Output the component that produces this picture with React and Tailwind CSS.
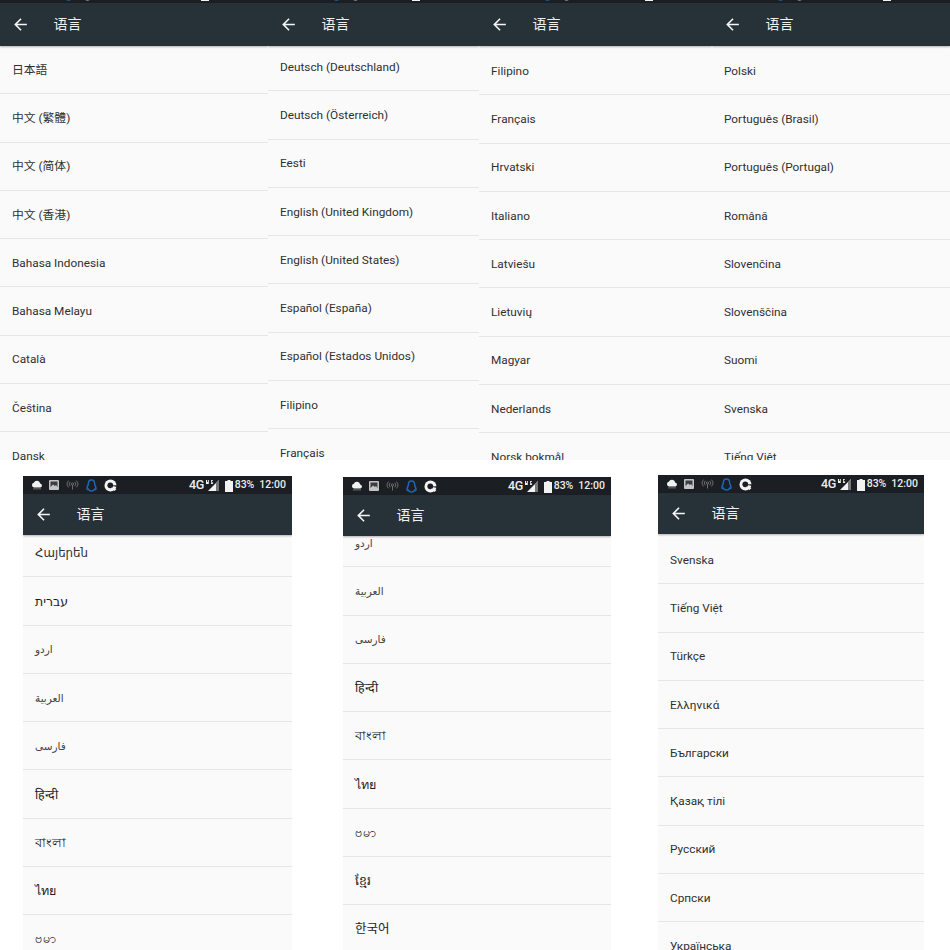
import React from 'react';

const page1 = ['日本語', '中文 (繁體)', '中文 (简体)', '中文 (香港)', 'Bahasa Indonesia', 'Bahasa Melayu', 'Català', 'Čeština', 'Dansk'];
const page2 = ['Deutsch (Deutschland)', 'Deutsch (Österreich)', 'Eesti', 'English (United Kingdom)', 'English (United States)', 'Español (España)', 'Español (Estados Unidos)', 'Filipino', 'Français'];
const page3 = ['Filipino', 'Français', 'Hrvatski', 'Italiano', 'Latviešu', 'Lietuvių', 'Magyar', 'Nederlands', 'Norsk bokmål'];
const page4 = ['Polski', 'Português (Brasil)', 'Português (Portugal)', 'Română', 'Slovenčina', 'Slovenščina', 'Suomi', 'Svenska', 'Tiếng Việt'];
const page5 = ['Հայերեն', 'עברית', 'اردو', 'العربية', 'فارسی', 'हिन्दी', 'বাংলা', 'ไทย', 'ဗမာ'];
const page6 = ['اردو', 'العربية', 'فارسی', 'हिन्दी', 'বাংলা', 'ไทย', 'ဗမာ', 'ខ្មែរ', '한국어'];
const page7 = ['Svenska', 'Tiếng Việt', 'Türkçe', 'Ελληνικά', 'Български', 'Қазақ тілі', 'Русский', 'Српски', 'Українська'];

// the arabic labels are smaller on the phone, the other scripts run a bit larger and darker
const labelClass = label => {
  if (/[\u0600-\u06ff]/.test(label)) return 'text-[10.500px] text-[#444]';
  if (/[\u0590-\u05ff\u0900-\u0dff\u0e00-\u0eff\u1000-\u109f\u1780-\u17ff\uac00-\ud7af]/.test(label)) return 'text-[12.500px] text-[#1c1c1c]';
  return 'text-[11.800px] text-[#303030]';
};

const StatusBar = ({ className }) => (
  <div className={`flex items-center justify-between h-[18px] shrink-0 bg-[#1b1e22] pl-2 pr-[6px] ${className || ''}`}>
    <div className="flex items-center gap-[6px]">
      <svg width="12" height="10" viewBox="0 0 12 10" fill="#f2f2f2">
        <path d="M3 7.500A2.400 2.400 0 0 1 2.800 2.800 3.400 3.400 0 0 1 9.200 3.400 2.100 2.100 0 0 1 9.400 7.500z" />
        <path d="M2 8.500h8v.8H2z" opacity="0.5" />
      </svg>
      <svg width="10" height="10" viewBox="0 0 10 10">
        <rect x="0" y="0" width="10" height="10" rx="1" fill="#c4c4c4" />
        <rect x="1.500" y="1.500" width="7" height="5.500" fill="#3a3e42" />
        <path d="M1.500 7l2.500-2.500 2 1.500 1-1 1.500 2z" fill="#c4c4c4" />
      </svg>
      <svg className="ml-px" width="13" height="10" viewBox="0 0 13 10" fill="none" stroke="#777" strokeWidth="0.9">
        <circle cx="6.500" cy="4" r="1.100" />
        <path d="M6.500 5v4.500M4.200 1.800a3.200 3.200 0 0 0 0 4.400M8.800 1.800a3.200 3.200 0 0 1 0 4.400M2.600.6a5 5 0 0 0 0 6.800M10.400.6a5 5 0 0 1 0 6.800" />
      </svg>
      <svg className="ml-px" width="11" height="13" viewBox="0 0 11 13" fill="none" stroke="#1f66b5" strokeWidth="1.500">
        <path d="M5.500 1C3.400 1 2.400 2.600 2.400 4.600 2.400 6 1 7.500 1 9.500c0 1 .6 1.300 1.500.7.400 1 1.500 1.800 3 1.800s2.600-.8 3-1.800c.9.600 1.500.3 1.500-.7 0-2-1.400-3.500-1.400-4.900C8.600 2.600 7.600 1 5.500 1z" />
      </svg>
      <svg className="ml-px" width="13" height="13" viewBox="0 0 13 13">
        <circle cx="6.500" cy="6.500" r="6" fill="#f4f4f4" />
        <circle cx="6.300" cy="6.300" r="2.900" fill="#1b1e22" />
        <path d="M6.500 6.500L13 6.200V8z" fill="#1b1e22" />
        <path d="M7 8.500l5.500 1.500-2 2z" fill="#f4f4f4" />
      </svg>
    </div>
    <div className="flex items-center text-[10.500px] font-medium text-[#ececec]">
      <span className="text-[12.500px] tracking-[-0.5px]">4G</span>
      <svg className="ml-px" width="15" height="13" viewBox="0 0 15 13">
        <path d="M14 1v11H3z" fill="#f2f2f2" />
        <path d="M11 4v8H14V1z" fill="#777" />
        <path d="M1 5V1h1.200v2h.8V1h.8v4zM6 1h2v.8H6.800v2.400h.6V3h.7v2H6z" fill="#f2f2f2" />
      </svg>
      <svg className="ml-[5px]" width="8" height="13" viewBox="0 0 8 13">
        <path d="M0 2h2.500V1h3v1H8v11H0z" fill="#f2f2f2" />
      </svg>
      <span className="ml-[2px]">83%</span>
      <span className="ml-[5px]">12:00</span>
    </div>
  </div>
);

const Header = ({ className }) => (
  <div className={`flex items-center shrink-0 bg-[#263238] shadow-[0_1px_2px_rgba(0,0,0,0.3)] relative z-10 pl-[11px] ${className}`}>
    <svg width="19" height="19" viewBox="0 0 24 24" fill="#f5f5f5">
      <path d="M20 11H7.830l5.590-5.590L12 4l-8 8 8 8 1.410-1.410L7.830 13H20v-2z" />
    </svg>
    <span className="ml-[23.500px] text-[14px] text-[#f0f0f0]">语言</span>
  </div>
);

const Screen = ({ items, className, barClass, headerClass, listClass }) => (
  <div className={`flex flex-col shrink-0 overflow-hidden bg-[#fafafa] ${className}`}>
    <StatusBar className={barClass} />
    <Header className={headerClass} />
    <div className="flex-1 min-h-0 overflow-hidden">
      <div className={`flex flex-col ${listClass}`}>
        {items.map((label, i) => (
          <div key={i} className={`flex items-center h-[48.250px] shrink-0 border-b border-[#e6e6e6] pl-3 pt-[2px] ${labelClass(label)}`}>
            {label}
          </div>
        ))}
      </div>
    </div>
  </div>
);

export default function App() {
  return (
    <div className="flex flex-col w-[950px] h-[950px] overflow-hidden bg-white font-['Roboto','DejaVu_Sans','Noto_Sans_CJK_SC','Noto_Sans_CJK_KR',sans-serif]">
      <div className="flex h-[460px] shrink-0 overflow-hidden">
        <Screen items={page1} className="w-[268px]" barClass="-mt-[15px]" headerClass="h-[43px]" listClass="mt-0" />
        <Screen items={page2} className="w-[211px]" barClass="-mt-[15px]" headerClass="h-[43px]" listClass="-mt-[3px]" />
        <Screen items={page3} className="w-[233px]" barClass="-mt-[15px]" headerClass="h-[43px]" listClass="mt-[1px]" />
        <Screen items={page4} className="w-[238px]" barClass="-mt-[15px]" headerClass="h-[43px]" listClass="mt-[1px]" />
      </div>
      <div className="flex flex-1 min-h-0 pl-[23px]">
        <Screen items={page5} className="w-[269px] mt-[16px]" headerClass="h-[41px]" listClass="-mt-[6px]" />
        <Screen items={page6} className="w-[268px] ml-[51px] mt-[17px]" headerClass="h-[41px]" listClass="-mt-[17px]" />
        <Screen items={page7} className="w-[266px] ml-[47px] mt-[15px]" headerClass="h-[41px]" listClass="mt-[2px]" />
      </div>
    </div>
  );
}
